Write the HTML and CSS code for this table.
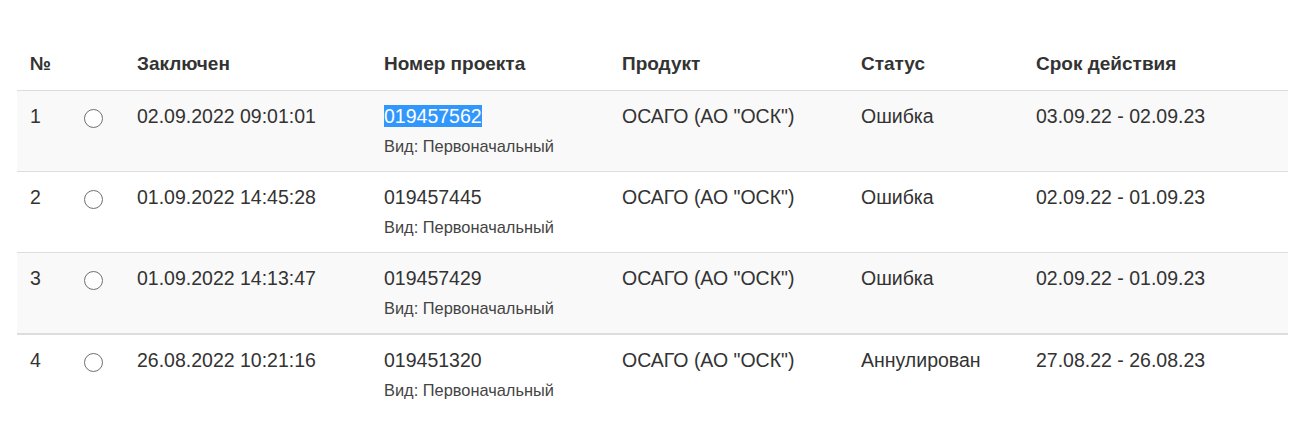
FILE: index.html
```html
<!DOCTYPE html>
<html lang="ru">
<head>
<meta charset="utf-8">
<title>Проекты</title>
<link rel="stylesheet" href="styles.css">
</head>
<body>
<table class="grid">
  <colgroup>
    <col class="c-num"><col class="c-radio"><col class="c-date"><col class="c-proj"><col class="c-prod"><col class="c-status"><col class="c-term">
  </colgroup>
  <thead>
    <tr><th>№</th><th></th><th>Заключен</th><th>Номер проекта</th><th>Продукт</th><th>Статус</th><th>Срок действия</th></tr>
  </thead>
  <tbody>
    <tr class="odd">
      <td><div class="main">1</div></td>
      <td><span class="radio"></span></td>
      <td><div class="main">02.09.2022 09:01:01</div></td>
      <td><div class="main"><span class="sel">019457562</span></div><div class="sub">Вид: Первоначальный</div></td>
      <td><div class="main">ОСАГО (АО "ОСК")</div></td>
      <td><div class="main">Ошибка</div></td>
      <td><div class="main">03.09.22 - 02.09.23</div></td>
    </tr>
    <tr>
      <td><div class="main">2</div></td>
      <td><span class="radio"></span></td>
      <td><div class="main">01.09.2022 14:45:28</div></td>
      <td><div class="main">019457445</div><div class="sub">Вид: Первоначальный</div></td>
      <td><div class="main">ОСАГО (АО "ОСК")</div></td>
      <td><div class="main">Ошибка</div></td>
      <td><div class="main">02.09.22 - 01.09.23</div></td>
    </tr>
    <tr class="odd last">
      <td><div class="main">3</div></td>
      <td><span class="radio"></span></td>
      <td><div class="main">01.09.2022 14:13:47</div></td>
      <td><div class="main">019457429</div><div class="sub">Вид: Первоначальный</div></td>
      <td><div class="main">ОСАГО (АО "ОСК")</div></td>
      <td><div class="main">Ошибка</div></td>
      <td><div class="main">02.09.22 - 01.09.23</div></td>
    </tr>
  </tbody>
  <tbody class="extra">
    <tr>
      <td><div class="main">4</div></td>
      <td><span class="radio"></span></td>
      <td><div class="main">26.08.2022 10:21:16</div></td>
      <td><div class="main">019451320</div><div class="sub">Вид: Первоначальный</div></td>
      <td><div class="main">ОСАГО (АО "ОСК")</div></td>
      <td><div class="main">Аннулирован</div></td>
      <td><div class="main">27.08.22 - 26.08.23</div></td>
    </tr>
  </tbody>
</table>
</body>
</html>
```

FILE: styles.css
```css
html, body {
  margin: 0;
  padding: 0;
  background: #ffffff;
}
body {
  font-family: "Liberation Sans", Arial, sans-serif;
  color: #333333;
}
.grid {
  margin: 38px 0 0 17px;
  width: 1271px;
  border-collapse: collapse;
  table-layout: fixed;
}
.c-num { width: 54px; }
.c-radio { width: 53px; }
.c-date { width: 247px; }
.c-proj { width: 238px; }
.c-prod { width: 239px; }
.c-status { width: 175px; }
.c-term { width: 265px; }

.grid th {
  text-align: left;
  font-weight: bold;
  font-size: 19px;
  line-height: 27px;
  padding: 12px 13px 13px;
  border-bottom: 1px solid #dddddd;
  color: #333333;
}
.grid td {
  vertical-align: top;
  padding: 12px 13px 13px;
  border-bottom: 1px solid #dddddd;
  font-size: 19.5px;
}
.grid tr.odd td {
  background: #f9f9f9;
}
.grid tr.last td {
  border-bottom: 2px solid #dddddd;
}
.grid tbody.extra td {
  border-bottom: none;
}
.main {
  line-height: 27px;
  white-space: nowrap;
}
.sub {
  margin-top: 4px;
  font-size: 16.4px;
  line-height: 24px;
  color: #444444;
  white-space: nowrap;
}
.sel {
  background: #3297fd;
  color: #ffffff;
}
.radio {
  display: block;
  box-sizing: border-box;
  width: 19px;
  height: 19px;
  margin-top: 6px;
  border: 1.5px solid #6f6f6f;
  border-radius: 50%;
  background: #ffffff;
}
```
